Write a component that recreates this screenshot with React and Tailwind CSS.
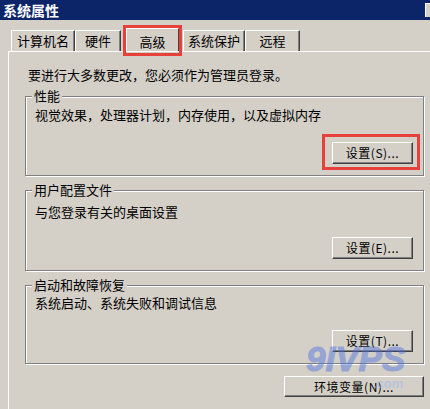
const font = { fontFamily: '"Noto Sans CJK SC", "Noto Sans", sans-serif' };

function Tab({ label, w }) {
  return (
    <div
      className={`h-[21px] ${w} flex justify-center pt-[3px] border-t border-l border-white border-r border-r-[#404040] shadow-[inset_-1px_0_0_#808080] text-[13px] leading-[14px]`}
    >
      {label}
    </div>
  );
}

function Btn({ label, w = "w-[81px]", h = "h-[22px]" }) {
  return (
    <div
      className={`${w} ${h} flex items-center justify-center border-t border-l border-white border-b border-r border-b-[#404040] border-r-[#404040] shadow-[inset_-1px_-1px_0_#808080] text-[12px] leading-[14px] tracking-[0.5px]`}
    >
      {label}
    </div>
  );
}

function Group({ title, desc, h, titleGap, btnGap, children }) {
  return (
    <div
      className={`w-[399px] ${h} border border-[#808080] shadow-[inset_1px_1px_0_#fff,1px_1px_0_#fff] flex flex-col`}
    >
      <span className="-mt-[8px] ml-[6px] px-[2px] w-fit bg-[#d4d0c8] text-[13px] leading-[14px]">
        {title}
      </span>
      <p className={`${titleGap} ml-[9px] text-[13px] leading-[14px]`}>{desc}</p>
      <div className={`${btnGap} flex justify-end`}>{children}</div>
    </div>
  );
}

export default function App() {
  return (
    <div
      className="relative w-[430px] h-[409px] overflow-hidden bg-[#d4d0c8] text-black flex flex-col"
      style={font}
    >
      {/* title bar */}
      <div className="h-[20px] shrink-0 bg-[#0c2468] flex items-center justify-between pl-[3px]">
        <span className="text-white font-bold text-[14px] leading-[16px]">系统属性</span>
        <div className="w-[5px] h-[14px] bg-[#d4d0c8] border-l border-t border-white" />
      </div>

      {/* tabs */}
      <div className="h-[31px] shrink-0 flex items-end pl-[11px]">
        <Tab label="计算机名" w="w-[64px]" />
        <Tab label="硬件" w="w-[46px]" />
        <div className="relative z-10 ml-[2px] -mb-[5px] w-[59px] h-[31px] border-[3px] border-[#e8413c] flex">
          <div className="flex-1 mb-[2px] flex justify-center pt-[6px] border-t border-l border-white border-r border-r-[#404040] bg-[#d4d0c8] text-[13px] leading-[14px]">
            高级
          </div>
        </div>
        <div className="ml-[1px]">
          <Tab label="系统保护" w="w-[62px]" />
        </div>
        <Tab label="远程" w="w-[55px]" />
      </div>

      {/* panel */}
      <div className="flex-1 ml-[8px] border-t border-l border-white pl-[16px] pt-[16px] flex flex-col">
        <p className="ml-[3px] text-[13px] leading-[14px]">要进行大多数更改，您必须作为管理员登录。</p>

        <div className="mt-[14px]">
          <Group
            title="性能"
            desc="视觉效果，处理器计划，内存使用，以及虚拟内存"
            h="h-[80px]"
            titleGap="mt-[5px]"
            btnGap="mt-[12px] pr-[3px]"
          >
            <div className="border-[3px] border-[#e8413c] pl-[7px] pr-[4px] pt-[5px] pb-[3px]">
              <Btn label="设置(S)..." />
            </div>
          </Group>
        </div>

        <div className="mt-[14px]">
          <Group
            title="用户配置文件"
            desc="与您登录有关的桌面设置"
            h="h-[81px]"
            titleGap="mt-[8px]"
            btnGap="mt-[18px] pr-[10px]"
          >
            <Btn label="设置(E)..." />
          </Group>
        </div>

        <div className="mt-[14px]">
          <Group
            title="启动和故障恢复"
            desc="系统启动、系统失败和调试信息"
            h="h-[79px]"
            titleGap="mt-[4px]"
            btnGap="mt-[20px] pr-[10px]"
          >
            <Btn label="设置(T)..." />
          </Group>
        </div>

        <div className="mt-[12px] w-[399px] flex justify-end">
          <Btn label="环境变量(N)..." w="w-[140px]" h="h-[21px]" />
        </div>
      </div>

      {/* watermark */}
      <div className="absolute left-[306px] top-[341px] pointer-events-none flex flex-col items-end">
        <span
          className="text-[35px] leading-[36px] font-bold italic text-[#4a6fe0] opacity-45 tracking-[0px] [-webkit-text-stroke:1px_#4a6fe0]"
          style={{ fontFamily: '"Liberation Sans", sans-serif' }}
        >
          9IVPS
        </span>
        <span
          className="text-[13px] leading-[13px] font-bold text-[#a9b9e6] opacity-60 mr-[2px]"
          style={{ fontFamily: '"Liberation Sans", sans-serif' }}
        >
          .com
        </span>
      </div>
    </div>
  );
}
